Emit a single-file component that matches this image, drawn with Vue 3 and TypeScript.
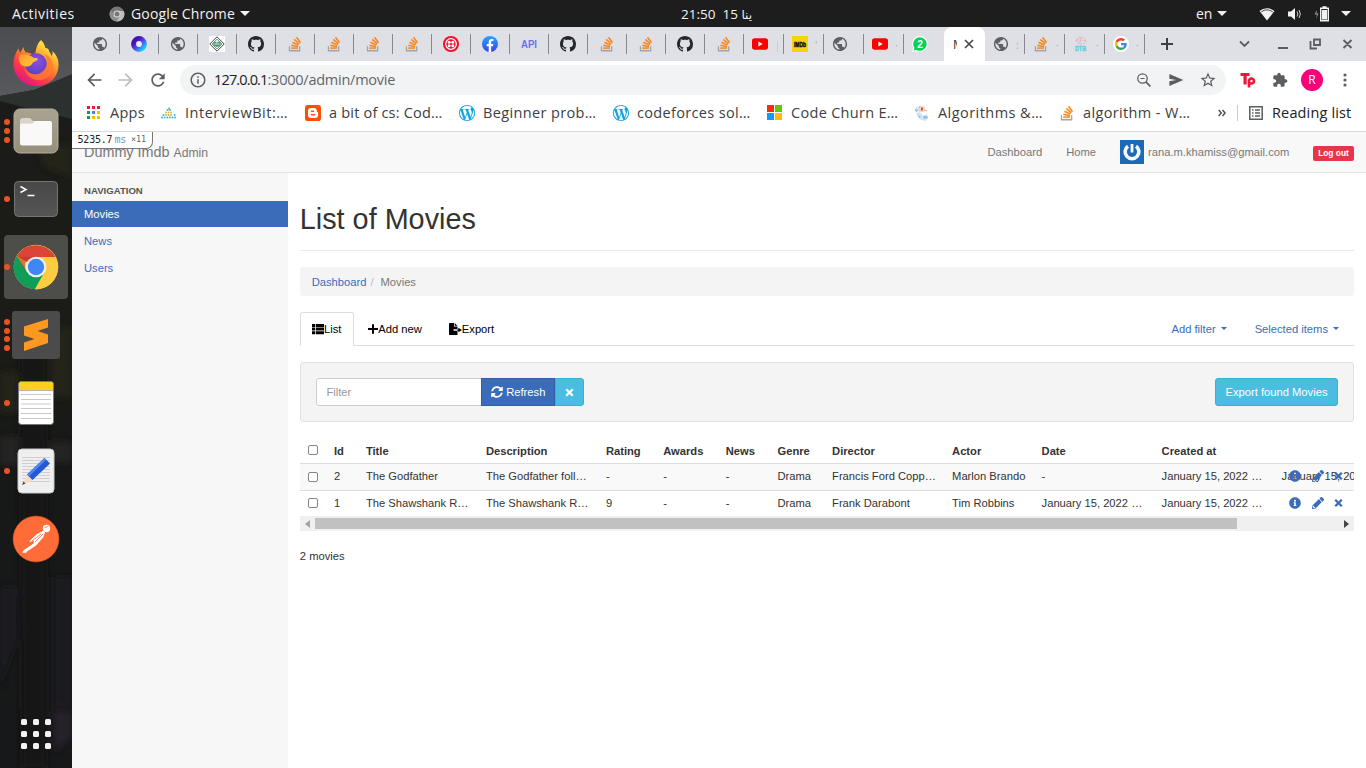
<script setup lang="ts">
interface Tab { icon: string; wide?: boolean; active?: boolean; bare?: boolean; frag?: string }
interface Bookmark { icon: string; label: string; width: number; spacing: number }
interface DockItem { icon: string; dots: number; focused?: boolean }
interface IconText { text: string; x: number; y: number; size: number; len: number; fill: string; stroke: number }

const iconTexts: Record<string, IconText> = {
  api: { text: 'API', x: 0, y: 12, size: 10.5, len: 16, fill: '#6c70ee', stroke: 0 },
  imdb: { text: 'IMDb', x: 2, y: 10.7, size: 7, len: 12, fill: '#111', stroke: 0.5 },
  whatsapp: { text: '2', x: 5.2, y: 11.5, size: 10, len: 5.6, fill: '#fff', stroke: 0 },
  dtb: { text: 'DTB', x: 2, y: 15, size: 7.5, len: 11, fill: '#50d5de', stroke: 0.4 },
}

const narrow = ['globe', 'ring', 'globe', 'gfg', 'github', 'so', 'so', 'so', 'so', 'twilio', 'facebook', 'api', 'github', 'so', 'so', 'github', 'so']
const tabs: Tab[] = [
  ...narrow.map((icon) => ({ icon })),
  { icon: 'youtube', wide: true, frag: '|' },
  { icon: 'imdb', wide: true, frag: "'" },
  { icon: 'globe', wide: true },
  { icon: 'youtube', wide: true, frag: '·' },
  { icon: 'whatsapp', wide: true, bare: true },
  { icon: '', active: true },
  { icon: 'globe', wide: true, frag: ':' },
  { icon: 'so', wide: true, frag: '·' },
  { icon: 'dtb', wide: true, frag: '·' },
  { icon: 'google', wide: true, frag: '·' },
]

const bookmarks: Bookmark[] = [
  { icon: 'apps', label: 'Apps', width: 75, spacing: 0.25 },
  { icon: 'interviewbit', label: 'InterviewBit:…', width: 144, spacing: 0.52 },
  { icon: 'blogger', label: 'a bit of cs: Cod…', width: 154, spacing: 0.2 },
  { icon: 'wordpress', label: 'Beginner prob…', width: 154, spacing: 0.36 },
  { icon: 'wordpress', label: 'codeforces sol…', width: 154, spacing: 0.34 },
  { icon: 'microsoft', label: 'Code Churn E…', width: 147, spacing: 0.3 },
  { icon: 'algo', label: 'Algorithms &…', width: 145, spacing: 0.45 },
  { icon: 'so', label: 'algorithm - W…', width: 150, spacing: 0.36 },
]

const dock: DockItem[] = [
  { icon: 'firefox', dots: 0 },
  { icon: 'files', dots: 3 },
  { icon: 'terminal', dots: 1 },
  { icon: 'chrome', dots: 1, focused: true },
  { icon: 'sublime', dots: 4 },
  { icon: 'notes', dots: 1 },
  { icon: 'editor', dots: 1 },
  { icon: 'postman', dots: 0 },
]

const headers = ['Id', 'Title', 'Description', 'Rating', 'Awards', 'News', 'Genre', 'Director', 'Actor', 'Date', 'Created at', '']
const rows = [
  ['2', 'The Godfather', 'The Godfather foll…', '-', '-', '-', 'Drama', 'Francis Ford Copp…', 'Marlon Brando', '-', 'January 15, 2022 …', 'January 15, 2022'],
  ['1', 'The Shawshank R…', 'The Shawshank R…', '9', '-', '-', 'Drama', 'Frank Darabont', 'Tim Robbins', 'January 15, 2022 …', 'January 15, 2022 …', ''],
]
</script>

<template>
  <svg class="defs" width="0" height="0" aria-hidden="true">
    <defs>
      <linearGradient id="gRing" x1="0" y1="0" x2="1" y2="1"><stop offset="0.2" stop-color="#4312b5" /><stop offset="0.55" stop-color="#5548ee" /><stop offset="0.9" stop-color="#14c5fa" /></linearGradient>
      <linearGradient id="gFb" x1="0" y1="0" x2="0" y2="1"><stop offset="0" stop-color="#2aa4fa" /><stop offset="1" stop-color="#3843f0" /></linearGradient>
      <linearGradient id="gFox" x1="0.85" y1="0.05" x2="0.25" y2="0.95"><stop offset="0.05" stop-color="#fff04a" /><stop offset="0.4" stop-color="#ff9727" /><stop offset="0.68" stop-color="#ff443c" /><stop offset="1" stop-color="#e41583" /></linearGradient>
      <linearGradient id="gFox2" x1="0" y1="0" x2="1" y2="0.6"><stop offset="0" stop-color="#ff982b" /><stop offset="1" stop-color="#ffc83a" /></linearGradient>
      <radialGradient id="gFoxIn" cx="0.55" cy="0.35" r="0.7"><stop offset="0" stop-color="#8b50e4" /><stop offset="1" stop-color="#5940bb" /></radialGradient>
      <linearGradient id="gTerm" x1="0" y1="0" x2="0" y2="1"><stop offset="0" stop-color="#484848" /><stop offset="1" stop-color="#555" /></linearGradient>
      <linearGradient id="gFiles" x1="0" y1="0" x2="0" y2="1"><stop offset="0" stop-color="#a9a391" /><stop offset="1" stop-color="#968f7c" /></linearGradient>
    </defs>
    <symbol id="i-globe" viewBox="0 0 24 24"><path fill="#5c6064" transform="translate(12 12) scale(1.06) translate(-12 -12)" d="M12 2C6.48 2 2 6.48 2 12s4.48 10 10 10 10-4.48 10-10S17.52 2 12 2zm-1 17.93c-3.95-.49-7-3.85-7-7.93 0-.62.08-1.21.21-1.79L9 15v1c0 1.1.9 2 2 2v1.93zm6.9-2.54c-.26-.81-1-1.39-1.9-1.39h-1v-3c0-.55-.45-1-1-1H8v-2h2c.55 0 1-.45 1-1V7h2c1.1 0 2-.9 2-2v-.41c2.93 1.19 5 4.06 5 7.41 0 2.08-.8 3.97-2.1 5.39z" /></symbol>
    <symbol id="i-ring" viewBox="0 0 16 16"><circle cx="8" cy="8" r="5.4" fill="#efeaff" stroke="url(#gRing)" stroke-width="5" /></symbol>
    <symbol id="i-gfg" viewBox="0 0 16 16"><path fill="#fff" d="M0 0h16v16H0z" /><path d="M8 .8 15.2 8 8 15.2.8 8z" fill="none" stroke="#444" stroke-width="1" /><path d="M8 3 13 8 8 13 3 8z" fill="#dcefe5" stroke="#555" stroke-width=".6" /><path d="M4 6.2 6.3 5.5 8 7l1.7-1.5 2.3.7-.7 3.5L8 11 4.7 9.700z" fill="#489b72" /><path d="M5.500 8h5" stroke="#d9f2e5" /></symbol>
    <symbol id="i-github" viewBox="0 0 16 16"><path fill="#23282e" d="M8 0C3.58 0 0 3.58 0 8c0 3.54 2.29 6.53 5.47 7.59.4.07.55-.17.55-.38 0-.19-.01-.82-.01-1.49-2.01.37-2.53-.49-2.69-.94-.09-.23-.48-.94-.82-1.13-.28-.15-.68-.52-.01-.53.63-.01 1.08.58 1.23.82.72 1.21 1.87.87 2.33.66.07-.52.28-.87.51-1.07-1.78-.2-3.64-.89-3.64-3.95 0-.87.31-1.59.82-2.15-.08-.2-.36-1.02.08-2.12 0 0 .67-.21 2.2.82.64-.18 1.32-.27 2-.27.68 0 1.36.09 2 .27 1.53-1.04 2.2-.82 2.2-.82.44 1.1.16 1.92.08 2.12.51.56.82 1.27.82 2.15 0 3.07-1.87 3.75-3.65 3.95.29.25.54.73.54 1.48 0 1.07-.01 1.93-.01 2.2 0 .21.15.46.55.38A8.013 8.013 0 0016 8c0-4.42-3.58-8-8-8z" /></symbol>
    <symbol id="i-so" viewBox="0 0 24 24"><g transform="translate(1 1.500) scale(.9)"><path fill="#f98018" stroke="#f98018" stroke-width=".5" d="M15.725 0l-1.72 1.277 6.39 8.588 1.716-1.277L15.725 0zm-3.94 3.418l-1.369 1.644 8.225 6.85 1.369-1.644-8.225-6.85zm-3.15 4.465l-.905 1.94 9.702 4.517.904-1.94-9.701-4.517zm-1.85 4.86l-.44 2.093 10.473 2.201.44-2.092-10.473-2.203zM6.155 17.603v2.13h10.66v-2.13z" /><path fill="#9ea5aa" d="M1.89 15.47V24h19.19v-8.53h-2.133v6.397H4.021v-6.396H1.89z" /></g></symbol>
    <symbol id="i-twilio" viewBox="0 0 16 16"><circle cx="8" cy="8" r="8" fill="#f20c2d" /><circle cx="8" cy="8" r="5.300" fill="none" stroke="#fff" stroke-width="1.300" /><g fill="#fff"><circle cx="6.200" cy="6.200" r="1.500" /><circle cx="9.800" cy="6.200" r="1.500" /><circle cx="6.200" cy="9.800" r="1.500" /><circle cx="9.800" cy="9.800" r="1.500" /></g></symbol>
    <symbol id="i-facebook" viewBox="0 0 16 16"><circle cx="8" cy="8" r="8" fill="url(#gFb)" /><path fill="#fff" d="M6.700 15.900V10.300H4.700V8h2V6.200c0-2.100 1.200-3.200 3-3.200.9 0 1.700.1 1.700.1v2h-1c-1 0-1.300.6-1.300 1.200V8h2.200l-.4 2.300H9.100v5.600z" /></symbol>
    <symbol id="i-youtube" viewBox="0 0 16 16"><rect y="2.300" width="16" height="11.400" rx="2.600" fill="#f00" /><path fill="#fff" d="m6.400 5.600 4.300 2.400-4.300 2.400z" /></symbol>
    <symbol id="i-imdb" viewBox="0 0 16 16"><path fill="#f5d310" d="M0 0h16v16H0z" /></symbol>
    <symbol id="i-whatsapp" viewBox="0 0 16 16"><path fill="#fff" d="M8 0a8 8 0 1 1-3.600 15.200L.2 16l1-4A8 8 0 0 1 8 0z" /><path fill="#06d255" d="M8 1.200a6.800 6.800 0 1 1-3.500 12.700l-2.800.7.7-2.800A6.800 6.800 0 0 1 8 1.200z" /></symbol>
    <symbol id="i-dtb" viewBox="0 0 16 16"><path d="M3 4l4-3 4 1 2 3-3 3H6zM7 1l1 3 5 1M3 4l5 0-2 4" fill="none" stroke="#dba8b2" stroke-width=".8" stroke-dasharray="2 1" /></symbol>
    <symbol id="i-google" viewBox="0 0 16 16"><circle cx="8" cy="8" r="8" fill="#fff" /><g transform="translate(2 2) scale(.25)"><path fill="#ea4335" d="M24 9.500c3.540 0 6.710 1.220 9.210 3.600l6.850-6.850C35.900 2.380 30.470 0 24 0 14.620 0 6.510 5.380 2.560 13.220l7.980 6.190C12.430 13.720 17.740 9.500 24 9.500z" /><path fill="#4285f4" d="M46.980 24.550c0-1.570-.15-3.090-.38-4.550H24v9.020h12.940c-.58 2.960-2.260 5.480-4.780 7.180l7.730 6c4.510-4.180 7.090-10.360 7.090-17.650z" /><path fill="#fbbc05" d="M10.530 28.590c-.48-1.450-.76-2.990-.76-4.590s.27-3.140.76-4.590l-7.980-6.190C.92 16.460 0 20.120 0 24c0 3.880.92 7.540 2.560 10.780l7.970-6.190z" /><path fill="#34a853" d="M24 48c6.480 0 11.930-2.130 15.890-5.810l-7.730-6c-2.150 1.450-4.920 2.300-8.160 2.300-6.260 0-11.570-4.220-13.470-9.910l-7.980 6.190C6.510 42.620 14.620 48 24 48z" /></g></symbol>
    <symbol id="i-apps" viewBox="0 0 16 16"><g transform="translate(1 1)"><path fill="#ee1c34" d="M0 0h3v3H0zM5 0h3v3H5zM10 0h3v3h-3z" /><path fill="#0f9d58" d="M0 5h3v3H0zM0 10h3v3H0z" /><path fill="#4285f4" d="M5 5h3v3H5z" /><path fill="#ffba00" d="M10 5h3v3h-3zM5 10h3v3H5zM10 10h3v3h-3z" /></g></symbol>
    <symbol id="i-interviewbit" viewBox="0 0 16 16"><g fill="none" stroke-linecap="round" stroke-width="1.900"><path d="M1 12.500h14.500" stroke="#2cc4ce" stroke-dasharray=".1 2.500" /><path d="M2.500 10h11.500" stroke="#2cc4ce" stroke-dasharray=".1 11" /><path d="M5 10h7" stroke="#ecb23e" stroke-dasharray=".1 2.400" /><path d="M5 7.400h7" stroke="#d9be5a" stroke-dasharray=".1 2.400" /><path d="M6.500 5h4" stroke="#46b6bb" stroke-dasharray=".1 2.400" /><path d="M8 3.500h.1" stroke="#62afb2" /></g></symbol>
    <symbol id="i-blogger" viewBox="0 0 16 16"><rect width="16" height="16" rx="2.800" fill="#fc4f08" /><path fill="#fff" fill-rule="evenodd" d="M6.200 3h2.600a3 3 0 0 1 3 2.800c0 .9.200 1.200.7 1.200.4 0 .6.3.6.700V9.700a3.200 3.200 0 0 1-3.200 3.300H6.200A3.200 3.200 0 0 1 3 9.800V6.200A3.200 3.200 0 0 1 6.200 3zm.3 2.400a.8.8 0 0 0 0 1.600h2a.8.8 0 0 0 0-1.600zm0 3.600a.8.8 0 0 0 0 1.600h3.200a.8.8 0 0 0 0-1.600z" /></symbol>
    <symbol id="i-wordpress" viewBox="0 0 24 24"><path fill="#0ba5de" stroke="#0ba5de" stroke-width=".25" d="M21.469 6.825c.84 1.537 1.318 3.300 1.318 5.175 0 3.979-2.156 7.456-5.363 9.325l3.295-9.527c.615-1.540.820-2.771.820-3.864 0-.405-.026-.780-.070-1.110m-7.981.105c.647-.030 1.232-.105 1.232-.105.582-.075.514-.930-.067-.899 0 0-1.755.135-2.880.135-1.064 0-2.850-.150-2.850-.150-.585-.030-.661.855-.075.885 0 0 .540.061 1.125.090l1.680 4.605-2.370 7.080L5.354 6.900c.649-.030 1.234-.100 1.234-.100.585-.075.516-.930-.065-.896 0 0-1.746.138-2.874.138-.200 0-.438-.008-.690-.015C4.911 3.150 8.235 1.215 12 1.215c2.809 0 5.365 1.072 7.286 2.833-.046-.003-.091-.009-.141-.009-1.060 0-1.812.923-1.812 1.914 0 .890.513 1.643 1.060 2.531.411.720.890 1.643.890 2.977 0 .915-.354 1.994-.821 3.479l-1.075 3.585-3.900-11.610.001.014zM12 22.784c-1.059 0-2.081-.153-3.048-.437l3.237-9.406 3.315 9.087c.024.053.050.101.078.149-1.120.393-2.325.609-3.582.609M1.211 12c0-1.564.336-3.050.935-4.390L7.290 21.709C3.694 19.960 1.212 16.271 1.211 12M12 0C5.385 0 0 5.385 0 12s5.385 12 12 12 12-5.385 12-12S18.615 0 12 0" /></symbol>
    <symbol id="i-microsoft" viewBox="0 0 16 16"><path fill="#f72d10" d="M0 0h7v7H0z" /><path fill="#60c80b" d="M8 0h7v7H8z" /><path fill="#139bf2" d="M0 8h7v7H0z" /><path fill="#fdbd08" d="M8 8h7v7H8z" /></symbol>
    <symbol id="i-algo" viewBox="0 0 16 16"><path fill="#cfe5f7" d="M2 2h5l2 3-3 2-5-2zM2 8l4-1 3 4 4-2 1 4-2 3-5-1-3-3z" /><path fill="#90bee6" d="m1 4 3 1-1 2-2-1zM9 11l4 0 1 2-4 1zM4 10l3 2-2 1z" /><circle cx="7.800" cy="4" r="3.300" fill="#f2d9cf" /><path fill="#dc4630" d="M7 2.500h1.800v3H7z" /><path d="m5 3 1-2M10 5l3 1" stroke="#e7b450" /></symbol>

    <symbol id="i-firefox" viewBox="0 0 48 48"><path fill="url(#gFox)" d="M29 1c2.500 2.500 4 5.500 4.500 8.500C33 8.500 37 9 37 12c1 1.500 2 3 2.500 5 1.200-1.500 1.200-3.200.8-4.800C44.500 15.500 47 21 46.500 27 46 38.500 37 47 24.500 47S2.500 38.500 1.500 26.500C1.200 20 3 14.500 6.500 9.500c.3 1.700 1 3.200 1.700 4.300L11.500 8c.3 2.200 1 3.800 2 5.200 3 .3 6 1.300 8 2.600l2-2.300C24 9 25.500 4 29 1z" /><circle cx="24" cy="25" r="10.800" fill="url(#gFoxIn)" /><path fill="url(#gFox2)" d="M7 21c-1-3 1-6.500 5.500-5.500 3 0 7 1.200 9.500 3.500 2.500 0 4 .3 4 1-.3 1.600-3.600 2.700-5 3.200-.7 2-2.500 4-5.500 4.300-5 .5-8-2.500-8.500-6.500z" /><path fill="#ff7a31" d="M12 27c3 9 14 11 20 4 4-5 4-11 0-16 5 1.500 9 6 9 12 0 9-7 15-15 14-7 0-13-6-14-14z" opacity=".8" /></symbol>
    <symbol id="i-files" viewBox="0 0 48 48"><rect x="2" y="2" width="44" height="44" rx="6" fill="url(#gFiles)" stroke="#b4ae9e" /><path fill="#d9d6c8" d="M8 14q0-3 3-3h7l3 3h16v5H8z" /><path fill="#f9f9f7" d="M8 18q0-1.500 1.500-1.500h11L23 14h15q2 0 2 2v20q0 2.500-2.500 2.500h-27Q8 38.500 8 36z" /></symbol>
    <symbol id="i-terminal" viewBox="0 0 48 48"><rect x="2.500" y="6.500" width="43" height="35" rx="4" fill="url(#gTerm)" stroke="#757575" /><path d="m8.500 11.500 5.500 3-5.500 3M15.500 20.500h7" fill="none" stroke="#fff" stroke-width="1.500" /></symbol>
    <symbol id="i-chrome" viewBox="0 0 48 48"><circle cx="24" cy="24" r="22.300" fill="#fdcd41" /><path fill="#db4437" d="M24 24 4.700 12.900A22.300 22.300 0 0 1 43.500 14H24z" /><path fill="#0f9d58" d="M4.700 12.900A22.300 22.300 0 0 0 23 46.300L32.700 29 15.300 29z" /><path fill="#fdcd41" d="M24 14h19.700A22.300 22.300 0 0 1 23 46.300L32.700 29z" /><path d="M4.700 12.900 13 27v-7l3-4 8-2H8z" fill="#b93125" opacity=".55" /><circle cx="24" cy="24" r="10.300" fill="#f1f1f1" /><circle cx="24" cy="24" r="8.200" fill="#4285f4" /></symbol>
    <symbol id="i-sublime" viewBox="0 0 48 48"><rect width="48" height="48" rx="3" fill="#4b4b4b" /><path fill="#ff9820" d="m12 15.500 24-7.500v8.500L25.500 20 36 23.500V32l-24 8v-8.500L22.500 28 12 24.500z" /><path fill="#e98512" d="M21.500 27.500 12 24.500 36 32z" opacity=".65" /></symbol>
    <symbol id="i-notes" viewBox="0 0 48 48"><rect x="6.500" y="2.500" width="35" height="43" rx="3" fill="#fff" stroke="#777" /><path fill="#fbd01d" d="M7 11V5q0-2 2-2h30q2 0 2 2v6z" /><path d="M7 11.500h34" stroke="#b6b5b0" /><path d="M9 15.500h30M9 20.500h30M9 25h30M9 29.500h30M9 34.500h30M9 39.500h30" stroke="#c8c8c8" /></symbol>
    <symbol id="i-editor" viewBox="0 0 48 48"><rect x="6" y="2" width="36" height="44" rx="4" fill="#efefef" stroke="#c8c8c8" /><path d="M10 10.500h28M10 13.500h28M10 16.500h28M10 19.500h28M10 22.500h28M10 25.500h28M10 28.500h28M10 31.500h28M10 34.500h28" stroke="#cfcfcf" /><path fill="#f8dcc0" d="m10 38 5-11 6 6z" /><path fill="#444" d="m10 38 1.500-3.500 2 2z" /><path fill="#2459d4" d="M15 27.500 32.500 11 38 16.500 20.500 33z" /><path fill="#5283ee" d="M15 27.500 32.500 11l1.800 1.800L17 29.500z" /></symbol>
    <symbol id="i-postman" viewBox="0 0 48 48"><circle cx="24" cy="24" r="23" fill="#ff6c37" stroke="#c54b1d" stroke-width=".5" /><circle cx="34.500" cy="13.500" r="3.700" fill="#fff" /><path fill="#fff" d="M31.500 15.500 25 19l-7.500 7 .5 1 4-1.500-.5 3L12 35l-2 2.500 4 .5 1-1.500 9-6 7.500-8.500 1.500-4.500z" /><path d="m20 26 9-7M23 27l8-8M32.500 12.500l4-1" stroke="#ff6c37" stroke-width=".8" /></symbol>
  </svg>

  <div class="desktop">
    <header class="topbar">
      <span class="activities">Activities</span>
      <svg class="mini-chrome" viewBox="0 0 16 16"><circle cx="8" cy="8" r="7.500" fill="#777" /><path fill="#bdbdbd" d="M8 5h6.800A7.500 7.500 0 0 1 7.500 15.500L11 9.700z" /><path fill="#8e8e8e" d="M1.600 4.200A7.500 7.500 0 0 0 7.500 15.500L10 11 5 9z" /><circle cx="8" cy="8" r="3.500" fill="#ddd" /><circle cx="8" cy="8" r="2.500" fill="#777" /></svg>
      <span class="appname">Google Chrome</span>
      <i class="tri"></i>
      <span class="clock">21:50&nbsp; 15 <span class="arabic">ينا</span></span>
      <span class="lang">en</span>
      <i class="tri"></i>
      <svg class="wifi" viewBox="0 0 16 14"><path d="M8 13.500.5 4A12 12 0 0 1 15.500 4z" fill="#f2f2f2" /><path d="M2.300 4.800A10 10 0 0 1 13.700 4.800" fill="none" stroke="#1d1d1d" stroke-width=".8" /></svg>
      <svg class="volume" viewBox="0 0 16 16"><path fill="#f2f2f2" d="M1 5.500h3L8 2v12l-4-3.500H1z" /><path d="M10 5.500q1.800 2.500 0 5M12 4q2.800 4 0 8" stroke="#d0d0d0" fill="none" /></svg>
      <svg class="battery" viewBox="0 0 16 16"><path d="m3 4-2.500 4.500H3L2 13l2.500-5.500H2.500z" fill="#999" /><path d="M6.700 2.200h7.600v12.600H6.700z" fill="none" stroke="#f2f2f2" stroke-width="1.400" /><path fill="#f2f2f2" d="M8.500.3h4V2h-4zM8 4h5v9.500H8z" /></svg>
      <i class="tri"></i>
    </header>

    <div class="below">
      <aside class="dock">
        <svg class="wallpaper" viewBox="0 0 72 741" preserveAspectRatio="none">
          <defs>
            <linearGradient id="gSky" x1="0" y1="0" x2="0" y2="1"><stop offset="0" stop-color="#4a4c4f" /><stop offset="1" stop-color="#58595c" /></linearGradient>
            <linearGradient id="gNight" x1="0" y1="0" x2="0" y2="1"><stop offset="0" stop-color="#1b1b1a" /><stop offset=".4" stop-color="#1b1c17" /><stop offset=".6" stop-color="#171918" /><stop offset="1" stop-color="#171819" /></linearGradient>
            <filter id="soft" x="-20%" y="-20%" width="140%" height="140%"><feGaussianBlur stdDeviation="3" /></filter>
          </defs>
          <path fill="url(#gNight)" d="M0 0h72v741H0z" /><path fill="url(#gSky)" d="M0 0h72v48L34 63 0 69z" /><path fill="#2c312f" d="M0 69 34 63 72 47v45L30 82 0 74z" />
          <g filter="url(#soft)"><path fill="#26281a" d="M35 118h37v32L45 140zM50 300h22v70H50zM0 345h18v40H0z" opacity=".8" /><path fill="#2a2727" d="M0 410h18v28H0zM50 415h22v20H50z" opacity=".7" /><path fill="#171615" d="M20 300h26v441H22z" /><path fill="#1c2022" d="M54 550h18v130H54zM0 560h18v50L0 660z" opacity=".7" /><path fill="#26242a" d="M54 684h18v26l-18 14z" /></g>
        </svg>
        <div v-for="d in dock" :key="d.icon" class="dock-item" :class="{ focused: d.focused }">
          <span class="dots"><i v-for="n in d.dots" :key="n"></i></span>
          <svg width="48" height="48"><use :href="'#i-' + d.icon" /></svg>
        </div>
        <div class="grid-btn"><i v-for="n in 9" :key="n"></i></div>
      </aside>

      <main class="chrome">
        <div class="tabs">
          <div v-for="(t, i) in tabs" :key="i" class="tab" :class="{ wide: t.wide, active: t.active, bare: t.bare }">
            <template v-if="t.active">
              <span class="clip">M</span>
              <svg width="10" height="10" viewBox="0 0 10 10"><path d="m1 1 8 8M9 1 1 9" stroke="#45484c" stroke-width="1.700" /></svg>
            </template>
            <template v-else>
              <svg width="16" height="16"><use v-if="t.icon !== 'api'" :href="'#i-' + t.icon" /><text v-if="iconTexts[t.icon]" class="icon-text" :x="iconTexts[t.icon].x" :y="iconTexts[t.icon].y" :font-size="iconTexts[t.icon].size" :textLength="iconTexts[t.icon].len" lengthAdjust="spacingAndGlyphs" :fill="iconTexts[t.icon].fill" :stroke="iconTexts[t.icon].fill" :stroke-width="iconTexts[t.icon].stroke">{{ iconTexts[t.icon].text }}</text></svg>
              <span v-if="t.frag" class="frag">{{ t.frag }}</span>
            </template>
          </div>
          <svg class="plus" width="12" height="12" viewBox="0 0 12 12"><path d="M6 0v12M0 6h12" stroke="#3c4043" stroke-width="2" /></svg>
          <svg class="wincontrols" width="110" height="16" viewBox="0 0 110 16"><g fill="none" stroke="#5a5d62" stroke-width="1.800"><path d="m1 5.500 4.500 4.500L10 5.500M39 12h10M75 3.500h6v5.500h-6zM71.500 5v7.500H78M104.500 4l8 8M112.500 4l-8 8" /></g></svg>
        </div>

        <div class="toolbar">
          <svg class="nav" viewBox="0 0 24 24"><path fill="#5a5d62" d="M21 11H7.830l5.590-5.590L12 4l-8 8 8 8 1.410-1.410L7.830 13H21z" /></svg>
          <svg class="nav" viewBox="0 0 24 24"><path fill="#babcbe" transform="matrix(-1 0 0 1 24 0)" d="M21 11H7.830l5.590-5.590L12 4l-8 8 8 8 1.410-1.410L7.830 13H21z" /></svg>
          <svg class="nav" viewBox="0 0 24 24"><path fill="#5a5d62" d="M17.650 6.350C16.200 4.900 14.210 4 12 4c-4.420 0-7.990 3.580-7.990 8s3.570 8 7.990 8c3.730 0 6.840-2.550 7.730-6h-2.080c-.82 2.330-3.040 4-5.650 4-3.310 0-6-2.690-6-6s2.690-6 6-6c1.660 0 3.140.69 4.220 1.780L13 11h7V4l-2.350 2.350z" /></svg>
          <div class="omnibox">
            <svg width="18" height="18" viewBox="0 0 24 24"><path fill="#5a5d62" d="M11 7h2v2h-2zm0 4h2v6h-2zm1-9C6.480 2 2 6.480 2 12s4.480 10 10 10 10-4.480 10-10S17.520 2 12 2zm0 18c-4.410 0-8-3.590-8-8s3.590-8 8-8 8 3.590 8 8-3.590 8-8 8z" /></svg>
            <span class="url"><b>127.0.0.1</b>:3000/admin/movie</span>
            <svg class="end" width="18" height="18" viewBox="0 0 24 24"><g fill="none" stroke="#5a5d62"><circle cx="10" cy="10" r="6.300" stroke-width="1.700" /><path d="m14.500 14.500 6 6" stroke-width="2.200" /><path d="M7.200 10h5.600" stroke-width="1.400" /></g></svg>
            <svg width="16" height="16" viewBox="0 0 24 24"><path fill="#5a5d62" d="M2.010 21 23 12 2.010 3 2 10l10 2-10 2z" /></svg>
            <svg width="18" height="18" viewBox="0 0 24 24"><path fill="#5a5d62" d="M22 9.240l-7.190-.62L12 2 9.190 8.630 2 9.240l5.460 4.730L5.820 21 12 17.270 18.180 21l-1.630-7.030L22 9.240zM12 15.400l-3.760 2.270 1-4.280-3.320-2.880 4.380-.38L12 6.100l1.710 4.040 4.380.38-3.320 2.880 1 4.280L12 15.400z" /></svg>
          </div>
          <svg class="tp" width="17" height="16" viewBox="0 0 17 16"><path fill="#f7123c" d="M.5 1h9v3H6.700v8.500H3.500V4h-3z" /><path fill="none" stroke="#f7123c" stroke-width="2.600" d="M9 15.500V9.200a2.500 2.500 0 1 1 2.500 2.300H9.200" /></svg>
          <svg class="puzzle" width="16" height="16" viewBox="0 0 24 24"><path fill="#5a5d62" d="M20.500 11H19V7c0-1.100-.9-2-2-2h-4V3.500C13 2.120 11.880 1 10.500 1S8 2.120 8 3.500V5H4c-1.100 0-1.990.9-1.990 2v3.800H3.500c1.490 0 2.700 1.210 2.700 2.700s-1.210 2.700-2.700 2.700H2V20c0 1.100.9 2 2 2h3.800v-1.500c0-1.490 1.210-2.700 2.700-2.700 1.490 0 2.700 1.210 2.700 2.700V22H17c1.100 0 2-.9 2-2v-4h1.500c1.380 0 2.500-1.120 2.500-2.500S21.880 11 20.500 11z" /></svg>
          <span class="profile">R</span>
          <svg class="kebab" width="4" height="14" viewBox="0 0 4 14"><g fill="#5a5d62"><circle cx="2" cy="2" r="1.600" /><circle cx="2" cy="7" r="1.600" /><circle cx="2" cy="12" r="1.600" /></g></svg>
        </div>

        <div class="bookmarks">
          <div v-for="b in bookmarks" :key="b.label" class="bookmark" :style="{ width: b.width + 'px' }">
            <svg width="16" height="16"><use :href="'#i-' + b.icon" /></svg><span :style="{ letterSpacing: b.spacing + 'px' }">{{ b.label }}</span>
          </div>
          <svg class="more" width="8" height="8" viewBox="0 0 8 8"><path d="M.7 1 3.300 4 .7 7M4.500 1l2.600 3-2.600 3" fill="none" stroke="#4c4f53" stroke-width="1.400" /></svg>
          <i class="bm-sep"></i>
          <svg width="14" height="14" viewBox="0 0 14 14"><path d="M.8.800h12.400v12.400H.800z" fill="none" stroke="#5a5d62" stroke-width="1.500" /><path d="M3 4h1.500M6 4h5M3 7h1.500M6 7h5M3 10h1.500M6 10h5" stroke="#5a5d62" stroke-width="1.300" /></svg>
          <span class="reading">Reading list</span>
        </div>

        <section class="page">
          <div class="perf"><span>5235.7</span><span class="ms">ms</span><span class="times">×11</span></div>
          <nav class="navbar">
            <span class="brand">Dummy Imdb <small>Admin</small></span>
            <span class="n-dash">Dashboard</span>
            <span class="n-home">Home</span>
            <svg class="avatar" width="24" height="24" viewBox="0 0 24 24"><path fill="#1c69b6" d="M0 0h24v24H0z" /><path d="M8 6.200a6.900 6.900 0 1 0 8 0" fill="none" stroke="#f7fbff" stroke-width="3.600" /><path d="M12 4v8.500" stroke="#f7fbff" stroke-width="2.800" /></svg>
            <span class="email">rana.m.khamiss@gmail.com</span>
            <span class="logout">Log out</span>
          </nav>
          <div class="columns">
            <div class="sidebar">
              <div class="side-title">NAVIGATION</div>
              <a class="current">Movies</a><a>News</a><a>Users</a>
            </div>
            <div class="content">
              <h1>List of Movies</h1>
              <div class="crumbs"><a>Dashboard</a><i>/</i><span>Movies</span></div>
              <div class="subtabs">
                <span class="st on"><svg width="12" height="12" viewBox="0 0 12 12"><path d="M0 1h3.300v3H0zM4 1h8v3H4zM0 4.600h3.300v3H0zM4 4.600h8v3H4zM0 8.200h3.300v3H0zM4 8.200h8v3H4z" /></svg>List</span>
                <span class="st add"><svg width="10" height="12" viewBox="0 0 10 12"><path d="M4 1.200h2V5h4v2H6v3.800H4V7H0V5h4z" /></svg>Add new</span>
                <span class="st exp"><svg width="13" height="12" viewBox="0 0 13 12"><path d="M.8 0H5v3.500h3.500v2.700H4.500v1.600h4V12H.8Q0 12 0 11.200V.8Q0 0 .8 0zM5.700 0l2.800 2.800H5.700zM9.300 6.200V4.800L13 7 9.300 9.200V7.800H8.500V6.200z" /></svg>Export</span>
                <a class="dd first">Add filter<i></i></a><a class="dd">Selected items<i></i></a>
              </div>
              <div class="well">
                <div class="filter">Filter</div>
                <div class="refresh"><svg width="12" height="12" viewBox="0 0 512 512"><path fill="#fff" d="M370.720 133.280C339.458 104.008 298.888 87.962 255.848 88c-77.458.068-144.328 53.178-162.791 126.850-1.344 5.363-6.122 9.150-11.651 9.150H24.103c-7.498 0-13.194-6.807-11.807-14.176C33.933 94.924 134.813 8 256 8c66.448 0 126.791 26.136 171.315 68.685L463.030 40.970C478.149 25.851 504 36.559 504 57.941V192c0 13.255-10.745 24-24 24H345.941c-21.382 0-32.090-25.851-16.971-40.971l41.750-41.749zM32 296h134.059c21.382 0 32.090 25.851 16.971 40.971l-41.750 41.750c31.262 29.273 71.835 45.319 114.876 45.280 77.418-.070 144.315-53.144 162.787-126.849 1.344-5.363 6.122-9.150 11.651-9.150h57.304c7.498 0 13.194 6.807 11.807 14.176C478.067 417.076 377.187 504 256 504c-66.448 0-126.791-26.136-171.315-68.685L48.970 471.030C33.851 486.149 8 475.441 8 454.059V320c0-13.255 10.745-24 24-24z" /></svg>Refresh</div>
                <div class="clear"><svg width="9" height="9" viewBox="0 0 9 9"><path d="m1.200 1.200 6.600 6.600M7.800 1.200 1.200 7.800" stroke="#fff" stroke-width="2.300" /></svg></div>
                <div class="export">Export found Movies</div>
              </div>
              <div class="table">
                <div class="row head"><span class="ck"><i></i></span><span v-for="(h, i) in headers" :key="i">{{ h }}</span></div>
                <div v-for="(r, ri) in rows" :key="ri" class="row" :class="{ odd: ri === 0 }">
                  <span class="ck"><i></i></span><span v-for="(c, i) in r" :key="i">{{ c }}</span>
                  <div class="actions">
                    <svg width="12" height="12" viewBox="0 0 512 512"><path d="M256 8C119.043 8 8 119.083 8 256c0 136.997 111.043 248 248 248s248-111.003 248-248C504 119.083 392.957 8 256 8zm0 110c23.196 0 42 18.804 42 42s-18.804 42-42 42-42-18.804-42-42 18.804-42 42-42zm56 254c0 6.627-5.373 12-12 12h-88c-6.627 0-12-5.373-12-12v-24c0-6.627 5.373-12 12-12h12v-64h-12c-6.627 0-12-5.373-12-12v-24c0-6.627 5.373-12 12-12h64c6.627 0 12 5.373 12 12v100h12c6.627 0 12 5.373 12 12v24z" /></svg>
                    <svg width="12" height="12" viewBox="0 0 512 512"><path d="M497.900 142.100l-46.100 46.100c-4.700 4.700-12.300 4.700-17 0l-111-111c-4.700-4.700-4.700-12.300 0-17l46.100-46.100c18.700-18.700 49.100-18.700 67.900 0l60.100 60.100c18.800 18.700 18.800 49.100 0 67.900zM284.200 99.800L21.600 362.400.4 483.900c-2.900 16.400 11.400 30.600 27.800 27.800l121.500-21.300 262.600-262.600c4.700-4.700 4.700-12.300 0-17l-111-111c-4.800-4.700-12.400-4.700-17.100 0zM88 424h48v36.300l-64.500 11.300-31.100-31.100L51.700 376H88v48z" /></svg>
                    <svg width="9" height="12" viewBox="0 0 9 12"><path d="m1.200 2.700 6.600 6.600M7.800 2.700 1.200 9.300" stroke="#3a6cba" stroke-width="2.300" /></svg>
                  </div>
                </div>
                <div class="scroll"><i class="left"></i><b></b><i class="right"></i></div>
              </div>
              <div class="count">2 movies</div>
            </div>
          </div>
        </section>
      </main>
    </div>
  </div>
</template>

<style>
html, body { margin: 0; overflow: hidden; }
</style>

<style scoped>
* { box-sizing: border-box; }
.defs { position: absolute; }
svg { display: block; flex: none; }
.icon-text { font-family: "Liberation Sans", sans-serif; font-weight: 700; }
.desktop { width: 1366px; height: 768px; overflow: hidden; font-family: "Open Sans", "Noto Sans", sans-serif; background: #fff; }
.topbar { height: 27px; background: #1d1d1d; color: #f2f2f2; display: flex; align-items: center; font-size: 14px; white-space: pre; }
.activities { width: 109px; padding-left: 12px; letter-spacing: .5px; }
.mini-chrome { width: 16px; height: 16px; margin-right: 6px; }
.appname { width: 104px; letter-spacing: .15px; }
.tri { border: 5px solid transparent; border-top-color: #f2f2f2; border-bottom: 0; margin-left: 5px; }
.clock { margin-left: 431px; width: 515px; font-size: 13.5px; letter-spacing: .1px; }
.arabic { font-family: "DejaVu Sans", sans-serif; font-size: 12px; }
.lang { width: 16px; }
.wifi { width: 16px; height: 14px; margin-left: 32px; }
.volume { width: 16px; height: 16px; margin-left: 12px; }
.battery { width: 16px; height: 16px; margin: 0 6px 0 11px; }
.below { display: flex; height: 741px; }
.dock { width: 72px; position: relative; padding-top: 2px; background: #181818; display: flex; flex-direction: column; }
.wallpaper { position: absolute; inset: 0; width: 72px; height: 741px; }
.dock-item { height: 68px; position: relative; display: flex; align-items: center; justify-content: center; }
.focused::before { content: ""; position: absolute; inset: 2px 4px; background: #ffffff38; border-radius: 4px; }
.dock-item svg { position: relative; }
.dots { position: absolute; z-index: 2; left: 4px; top: 0; height: 68px; display: flex; flex-direction: column; justify-content: center; gap: 2.800px; }
.dots i { width: 6px; height: 6px; border-radius: 3px; background: #e95420; }
.grid-btn { position: relative; margin: auto auto 19px; display: grid; grid-template-columns: repeat(3, 6px); gap: 6px; }
.grid-btn i { height: 6px; border-radius: 1.500px; background: #f2f2f2; }
.chrome { flex: 1; min-width: 0; display: flex; flex-direction: column; }
.tabs { height: 34px; background: #dee0e5; display: flex; align-items: center; padding-left: 9px; flex: none; }
.tab { width: 39px; height: 20px; flex: none; display: flex; align-items: center; justify-content: center; border-right: 1px solid #85888c; overflow: hidden; }
.tab.wide { width: 40px; justify-content: flex-start; padding-left: 8px; }
.tab.bare { border-right: 0; }
.tab.active { width: 41px; height: 34px; border: 0; background: #fff; border-radius: 8px 8px 0 0; justify-content: flex-start; padding-left: 9px; }
.clip { width: 4px; margin-right: 7px; overflow: hidden; font-size: 12px; color: #333; }
.frag { color: #aaa; font-size: 11px; margin-left: 7px; width: 3px; overflow: hidden; }
.plus { margin-left: 16px; }
.wincontrols { margin-left: 66px; overflow: visible; }
.toolbar { height: 37px; display: flex; align-items: center; padding-left: 12px; flex: none; }
.nav { width: 20px; height: 20px; margin-right: 12px; }
.omnibox { width: 1046px; height: 30px; border-radius: 15px; background: #f1f3f4; display: flex; align-items: center; padding: 0 9px; font-size: 14.500px; }
.url { margin-left: 7px; color: #62666b; letter-spacing: -.24px; }
.url b { font-weight: 400; color: #202124; letter-spacing: -.85px; }
.end { margin-left: auto; margin-right: 15px; }
.end + svg { margin-right: 15px; }
.tp { margin-left: 14px; }
.puzzle { margin-left: 15px; }
.profile { margin-left: 13px; width: 22px; height: 22px; border-radius: 11px; background: #f90079; color: #fff; font-size: 12px; text-align: center; line-height: 22px; }
.kebab { margin-left: 19.500px; }
.bookmarks { height: 33px; display: flex; align-items: center; padding: 0 0 4px 14px; font-size: 14.500px; color: #3c4043; flex: none; white-space: nowrap; }
.bookmark { display: flex; align-items: center; flex: none; gap: 8px; }
.more { margin-left: 9px; }
.bm-sep { width: 1px; height: 16px; background: #c8cacc; margin: 0 11px 0 auto; }
.reading { color: #202124; width: 103px; padding-left: 9px; letter-spacing: .15px; }
.page { flex: 1; position: relative; border-top: 1px solid #d8d8d8; font: 11.200px/16px "Liberation Sans", sans-serif; color: #333; display: flex; flex-direction: column; }
.perf { position: absolute; left: 0; top: 0; width: 81px; height: 17px; background: #fff; border: solid #777; border-width: 0 1px 1px 0; border-bottom-right-radius: 7px; font: 10px/15px "DejaVu Sans Mono", monospace; padding-left: 5.500px; display: flex; color: #222; letter-spacing: -.2px; }
.ms { color: #6d9cc7; margin-left: 2px; }
.times { color: #666; font-size: 8.500px; margin-left: 5px; }
.navbar { height: 41px; border-bottom: 1px solid #e3e3e3; background: #f8f8f8; display: flex; align-items: center; padding-left: 12px; color: #777; flex: none; }
.brand { font-size: 14.400px; }
.brand small { font-size: 12.200px; }
.n-dash { margin-left: auto; }
.n-home { margin-left: 24px; }
.avatar { margin-left: 24px; }
.email { margin-left: 4px; width: 165px; }
.logout { width: 41px; height: 15px; margin: 2px 12px 0 0; background: #e4384a; color: #fff; font: bold 8.400px/15px "Liberation Sans", sans-serif; text-align: center; border-radius: 2px; }
.columns { display: flex; flex: 1; }
.sidebar { width: 216px; background: #f7f7f7; padding-top: 10px; }
.side-title { font-size: 9.600px; font-weight: 700; padding-left: 12px; color: #555; height: 18px; }
.sidebar a { display: block; height: 26px; margin-bottom: 1px; padding-left: 12px; line-height: 26px; color: #3a6cba; }
.sidebar .current { background: #3a6cba; color: #fff; }
.content { flex: 1; min-width: 0; padding: 0 12px 0 11.800px; }
h1 { margin: 0; height: 78px; padding-top: 30px; border-bottom: 1px solid #eaeaea; font-size: 28.800px; line-height: 32px; font-weight: 500; }
.crumbs { margin-top: 16px; height: 29px; background: #f4f4f4; border-radius: 3px; display: flex; align-items: center; padding-left: 11.900px; color: #777; }
a { color: #3a6cba; }
.crumbs i { font-style: normal; color: #bbb; margin: 0 7px 0 4px; }
.subtabs { margin-top: 16px; height: 34px; border-bottom: 1px solid #ddd; display: flex; align-items: center; color: #000; }
.st { display: flex; align-items: center; height: 34px; }
.on { width: 54px; border: 1px solid #ddd; border-bottom-color: #fff; border-radius: 3px 3px 0 0; padding-left: 11.200px; }
.add { margin-left: 14.500px; }
.exp { margin-left: 27px; }
.dd { display: flex; align-items: center; margin-right: 15px; }
.dd.first { margin-left: auto; margin-right: 28px; }
.dd i { border: 3px solid transparent; border-top-color: #3a6cba; border-bottom: 0; margin-left: 5px; }
.well { margin-top: 16px; height: 60px; border: 1px solid #e1e1e1; border-radius: 3px; background: #f4f4f4; padding: 15px; display: flex; }
.filter { width: 166px; height: 28px; background: #fff; border: 1px solid #ccc; border-radius: 3px 0 0 3px; padding-left: 9.600px; line-height: 26px; color: #999; }
.refresh { width: 74px; height: 28px; margin-left: -1px; background: #3a6cba; border: 1px solid #345fa6; color: #fff; display: flex; align-items: center; gap: 3px; padding-left: 9.400px; }
.clear { width: 29px; height: 28px; background: #4bbde0; border: 1px solid #31b2d8; border-radius: 0 3px 3px 0; display: flex; align-items: center; justify-content: center; }
.export { margin-left: auto; width: 123px; height: 28px; background: #4bbde0; border: 1px solid #31b2d8; border-radius: 3px; color: #fff; text-align: center; line-height: 26px; }
.table { margin-top: 16px; overflow: hidden; }
.row { position: relative; display: grid; grid-template-columns: 27.700px 32px 120px 120px 57.300px 62.500px 51.800px 54.600px 120px 89.500px 120px 120px 120px; height: 27px; line-height: 25px; border-top: 1px solid #ddd; }
.row > span { padding-left: 6.400px; white-space: nowrap; }
.head { height: 25px; border: 0; font-weight: 700; line-height: 26px; }
.odd { background: #f9f9f9; }
.row > .ck { padding: 7px 0 0 8px; }
.row.odd > .ck { padding-top: 8px; }
.ck i { display: block; width: 10px; height: 10px; border: 1px solid #858585; border-radius: 2px; background: #fff; }
.actions { position: absolute; left: 989.500px; top: 6px; display: flex; gap: 10.400px; fill: #3a6cba; }
.scroll { height: 15px; margin-top: -1px; position: relative; background: #f0f0f0; display: flex; align-items: center; justify-content: space-between; padding: 0 5px; }
.scroll b { width: 922px; height: 11px; background: #c1c1c1; margin-right: auto; margin-left: 5px; }
.left { border: 4px solid transparent; border-right: 5px solid #a3a3a3; border-left: 0; }
.right { border: 4px solid transparent; border-left: 5px solid #444; border-right: 0; }
.count { margin-top: 17px; }
</style>
